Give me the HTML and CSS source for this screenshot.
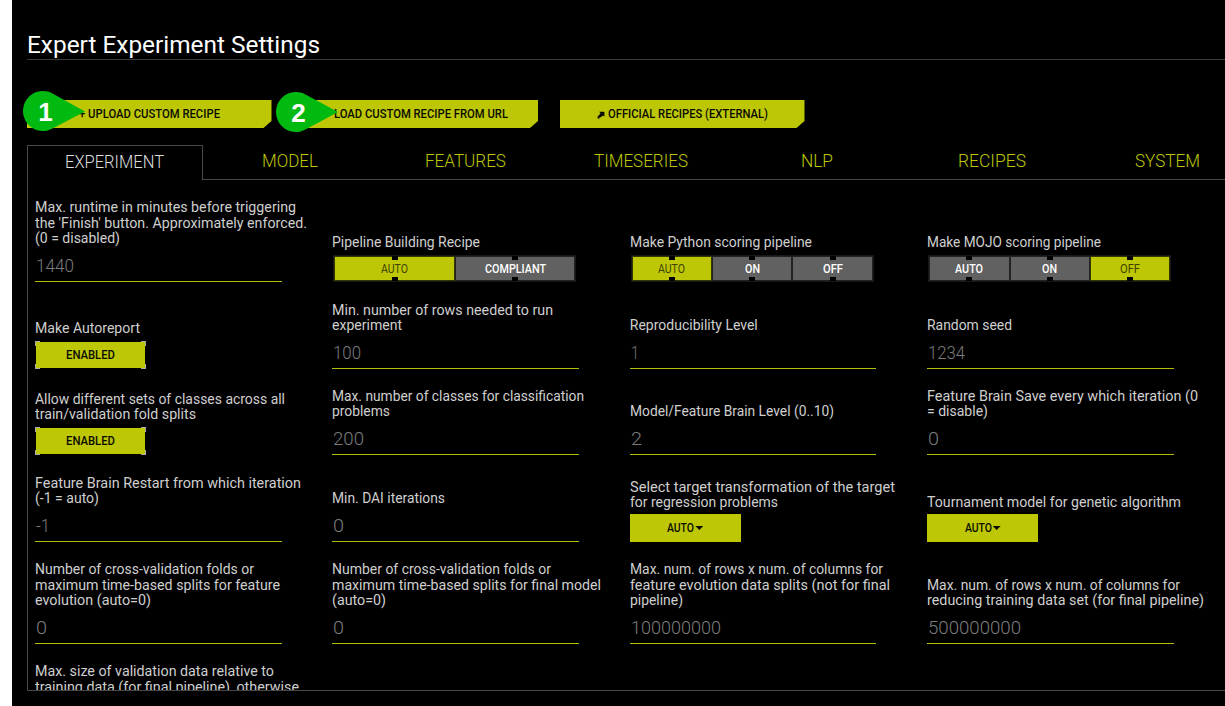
FILE: index.html
```html
<!DOCTYPE html>
<html lang="en">
<head>
<meta charset="utf-8">
<title>Expert Experiment Settings</title>
<link rel="stylesheet" href="styles.css">
</head>
<body>
<main class="dialog">
  <h1 class="title"><span class="t" data-w="293">Expert Experiment Settings</span></h1>

  <div class="actions">
    <div class="action-wrap">
      <button class="action"><span class="t" data-w="141">+ UPLOAD CUSTOM RECIPE</span></button>
      <svg class="pin pin-one" viewBox="0 0 62 40"><path d="M29.5 2.4A20 20 0 1 0 29.5 37.6L62 20.5Z"/><text x="22.5" y="29.5">1</text></svg>
    </div>
    <div class="action-wrap">
      <button class="action action-url"><span class="t" data-w="174">LOAD CUSTOM RECIPE FROM URL</span></button>
      <svg class="pin pin-two" viewBox="0 0 62 40"><path d="M29.5 2.4A20 20 0 1 0 29.5 37.6L62 20Z"/><text x="22.5" y="29.5">2</text></svg>
    </div>
    <div class="action-wrap">
      <button class="action"><svg class="arrow" viewBox="0 0 8 8"><path d="M2.2 .8H7.4V5.6L5.9 4.6L3.9 6.3H2.6V7.5H.6V5.4L3.5 2.6Z"/></svg><span class="t" data-w="160">OFFICIAL RECIPES (EXTERNAL)</span></button>
    </div>
  </div>

  <nav class="tabs">
    <a class="tab tab-active"><span class="t" data-w="99">EXPERIMENT</span></a>
    <a class="tab"><span class="t" data-w="56">MODEL</span></a>
    <a class="tab"><span class="t" data-w="81">FEATURES</span></a>
    <a class="tab"><span class="t" data-w="94">TIMESERIES</span></a>
    <a class="tab"><span class="t" data-w="32">NLP</span></a>
    <a class="tab"><span class="t" data-w="68">RECIPES</span></a>
    <a class="tab"><span class="t" data-w="65">SYSTEM</span></a>
  </nav>

  <section class="panel">
    <div class="cell">
      <label class="label"><span class="t" data-w="261">Max. runtime in minutes before triggering</span><span class="t" data-w="272">the 'Finish' button. Approximately enforced.</span><span class="t" data-w="85">(0 = disabled)</span></label>
      <div class="field"><span class="t" data-w="38">1440</span></div>
    </div>
    <div class="cell">
      <label class="label"><span class="t" data-w="148">Pipeline Building Recipe</span></label>
      <div class="toggle"><span class="opt on"><span class="t" data-w="27">AUTO</span></span><span class="opt"><span class="t" data-w="61">COMPLIANT</span></span></div>
    </div>
    <div class="cell">
      <label class="label"><span class="t" data-w="182">Make Python scoring pipeline</span></label>
      <div class="toggle"><span class="opt on"><span class="t" data-w="27">AUTO</span></span><span class="opt"><span class="t" data-w="15">ON</span></span><span class="opt"><span class="t" data-w="20">OFF</span></span></div>
    </div>
    <div class="cell">
      <label class="label"><span class="t" data-w="174">Make MOJO scoring pipeline</span></label>
      <div class="toggle"><span class="opt"><span class="t" data-w="28">AUTO</span></span><span class="opt"><span class="t" data-w="15">ON</span></span><span class="opt on"><span class="t" data-w="20">OFF</span></span></div>
    </div>

    <div class="cell">
      <label class="label"><span class="t" data-w="105">Make Autoreport</span></label>
      <button class="enabled"><span class="t" data-w="49">ENABLED</span></button>
    </div>
    <div class="cell">
      <label class="label"><span class="t" data-w="221">Min. number of rows needed to run</span><span class="t" data-w="70">experiment</span></label>
      <div class="field"><span class="t" data-w="28">100</span></div>
    </div>
    <div class="cell">
      <label class="label"><span class="t" data-w="128">Reproducibility Level</span></label>
      <div class="field"><span class="t" data-w="8">1</span></div>
    </div>
    <div class="cell">
      <label class="label"><span class="t" data-w="85">Random seed</span></label>
      <div class="field"><span class="t" data-w="37">1234</span></div>
    </div>

    <div class="cell">
      <label class="label"><span class="t" data-w="250">Allow different sets of classes across all</span><span class="t" data-w="161">train/validation fold splits</span></label>
      <button class="enabled"><span class="t" data-w="49">ENABLED</span></button>
    </div>
    <div class="cell">
      <label class="label"><span class="t" data-w="252">Max. number of classes for classification</span><span class="t" data-w="58">problems</span></label>
      <div class="field"><span class="t" data-w="31">200</span></div>
    </div>
    <div class="cell">
      <label class="label"><span class="t" data-w="204">Model/Feature Brain Level (0..10)</span></label>
      <div class="field"><span class="t" data-w="11">2</span></div>
    </div>
    <div class="cell">
      <label class="label"><span class="t" data-w="271">Feature Brain Save every which iteration (0</span><span class="t" data-w="61">= disable)</span></label>
      <div class="field"><span class="t" data-w="11">0</span></div>
    </div>

    <div class="cell">
      <label class="label"><span class="t" data-w="266">Feature Brain Restart from which iteration</span><span class="t" data-w="64">(-1 = auto)</span></label>
      <div class="field"><span class="t" data-w="14">-1</span></div>
    </div>
    <div class="cell">
      <label class="label"><span class="t" data-w="113">Min. DAI iterations</span></label>
      <div class="field"><span class="t" data-w="11">0</span></div>
    </div>
    <div class="cell">
      <label class="label"><span class="t" data-w="265">Select target transformation of the target</span><span class="t" data-w="148">for regression problems</span></label>
      <button class="select"><span class="t" data-w="27">AUTO</span><i class="caret"></i></button>
    </div>
    <div class="cell">
      <label class="label"><span class="t" data-w="254">Tournament model for genetic algorithm</span></label>
      <button class="select"><span class="t" data-w="27">AUTO</span><i class="caret"></i></button>
    </div>

    <div class="cell">
      <label class="label"><span class="t" data-w="219">Number of cross-validation folds or</span><span class="t" data-w="245">maximum time-based splits for feature</span><span class="t" data-w="116">evolution (auto=0)</span></label>
      <div class="field"><span class="t" data-w="11">0</span></div>
    </div>
    <div class="cell">
      <label class="label"><span class="t" data-w="219">Number of cross-validation folds or</span><span class="t" data-w="269">maximum time-based splits for final model</span><span class="t" data-w="54">(auto=0)</span></label>
      <div class="field"><span class="t" data-w="11">0</span></div>
    </div>
    <div class="cell">
      <label class="label"><span class="t" data-w="253">Max. num. of rows x num. of columns for</span><span class="t" data-w="260">feature evolution data splits (not for final</span><span class="t" data-w="53">pipeline)</span></label>
      <div class="field"><span class="t" data-w="90">100000000</span></div>
    </div>
    <div class="cell">
      <label class="label"><span class="t" data-w="253">Max. num. of rows x num. of columns for</span><span class="t" data-w="277">reducing training data set (for final pipeline)</span></label>
      <div class="field"><span class="t" data-w="93">500000000</span></div>
    </div>

    <div class="cell cell-last">
      <label class="label"><span class="t" data-w="239">Max. size of validation data relative to</span><span class="t" data-w="264">training data (for final pipeline), otherwise</span></label>
    </div>
  </section>
</main>
<script src="fit.js"></script>
</body>
</html>
```
FILE: styles.css
```css
* { box-sizing: border-box; }
html { background: #fff; overflow: hidden; }
body { margin: 0; height: 706px; overflow: hidden; font-family: Roboto, "Liberation Sans", sans-serif; }
button { font-family: inherit; border: 0; padding: 0; border-radius: 0; }
.t { display: inline-block; white-space: nowrap; flex: none; transform-origin: left; }

.dialog { margin-left: 12px; height: 706px; padding: 30px 0 0 15px; background: #000; overflow: hidden; }
.title { margin: 0; height: 30px; border-bottom: 1px solid #3a3a3a; color: #fff; font-size: 23px; font-weight: 400; line-height: 32px; }

.actions { display: flex; gap: 22px; margin-top: 40px; }
.action-wrap { position: relative; width: 244.5px; height: 28px; }
.action { display: flex; align-items: center; justify-content: center; width: 100%; height: 28px; background: #bdc706; color: #0b0b00; font-size: 12.3px; font-weight: 500; clip-path: polygon(0 0, 100% 0, 100% 21px, calc(100% - 8px) 100%, 0 100%); }
.action-url { padding-left: 10px; }
.arrow { width: 8px; height: 8px; margin: 2px 3px 0 0; fill: #0b0b00; }
.pin { position: absolute; width: 62px; height: 40px; overflow: visible; fill: #00b911; }
.pin-one { left: -4.5px; top: -9px; }
.pin-two { left: -17.5px; top: -8px; }
.pin path { stroke: none; }
.pin text { fill: #fff; font: bold 26px "Liberation Sans", sans-serif; text-anchor: middle; }

.tabs { display: grid; grid-template-columns: repeat(7, 175.5px); margin-top: 17px; height: 35px; }
.tab { display: flex; align-items: center; justify-content: center; padding-bottom: 2px; border-bottom: 1px solid #484848; color: #bdc706; font-size: 18px; font-weight: 300; line-height: 30px; }
.tab-active { border: 1px solid #484848; border-bottom: 0; padding-bottom: 3px; color: #ddd; }

.panel { display: grid; grid-template-columns: repeat(4, 297.4px); grid-template-rows: 102px 87px 86px 87px 102px 60px; width: 1240px; height: 511px; padding-left: 7px; border-left: 1px solid #484848; border-bottom: 1px solid #484848; overflow: hidden; }
.cell { display: flex; flex-direction: column; justify-content: flex-end; align-items: flex-start; }
.cell-last { justify-content: flex-start; padding-top: 20px; }
.label { display: flex; flex-direction: column; align-items: flex-start; color: #cfcfcf; font-size: 14px; line-height: 15.6px; }
.field { width: 246.5px; height: 35px; padding-top: 9px; border-bottom: 1px solid #b4bd06; color: #7c7c7c; font-size: 18px; font-weight: 300; line-height: 20px; }
.field .t { margin-left: 1px; }

.toggle { display: flex; width: 243px; height: 27px; margin: 4px 0 0 1px; border: 1px solid #171717; }
.opt { position: relative; display: flex; flex: 1; align-items: center; justify-content: center; border: 1px solid #222; background: #616161; color: #fff; font-size: 12.3px; font-weight: 500; }
.opt.on { background: #bdc706; color: #3f4300; font-weight: 400; border-color: #343700; }
.opt::before, .opt::after { content: ""; position: absolute; left: calc(50% - 3px); width: 6px; height: 4px; background: #000; }
.opt::before { top: -1px; }
.opt::after { bottom: -1px; }

.enabled, .select { display: flex; align-items: center; justify-content: center; color: #0b0b00; font-size: 12.3px; font-weight: 500; }
.enabled { width: 111px; height: 28px; margin-top: 4px; border: 1px solid #000; background: #bdc706; position: relative; }
.enabled::before { content: ""; position: absolute; inset: -1px; background:
  linear-gradient(#aaa, #aaa) 0 0 / 5px 1px, linear-gradient(#aaa, #aaa) 0 0 / 1px 5px,
  linear-gradient(#aaa, #aaa) 100% 0 / 5px 1px, linear-gradient(#aaa, #aaa) 100% 0 / 1px 5px,
  linear-gradient(#aaa, #aaa) 0 100% / 5px 1px, linear-gradient(#aaa, #aaa) 0 100% / 1px 5px,
  linear-gradient(#aaa, #aaa) 100% 100% / 5px 1px, linear-gradient(#aaa, #aaa) 100% 100% / 1px 5px;
  background-repeat: no-repeat; }
.select { width: 111px; height: 28px; margin-top: 3px; background: #bdc706; }
.caret { width: 8px; height: 4px; margin-left: 1px; background: #0b0b00; clip-path: polygon(0 0, 100% 0, 50% 100%); }
```
FILE: fit.js
```js
// Condense or widen each line of text to its measure.
document.querySelectorAll('.t[data-w]').forEach(function (el) {
  var natural = el.getBoundingClientRect().width;
  var target = Number(el.dataset.w);
  el.style.transform = 'scaleX(' + target / natural + ')';
  el.style.marginRight = (target - natural) + 'px';
});
```
